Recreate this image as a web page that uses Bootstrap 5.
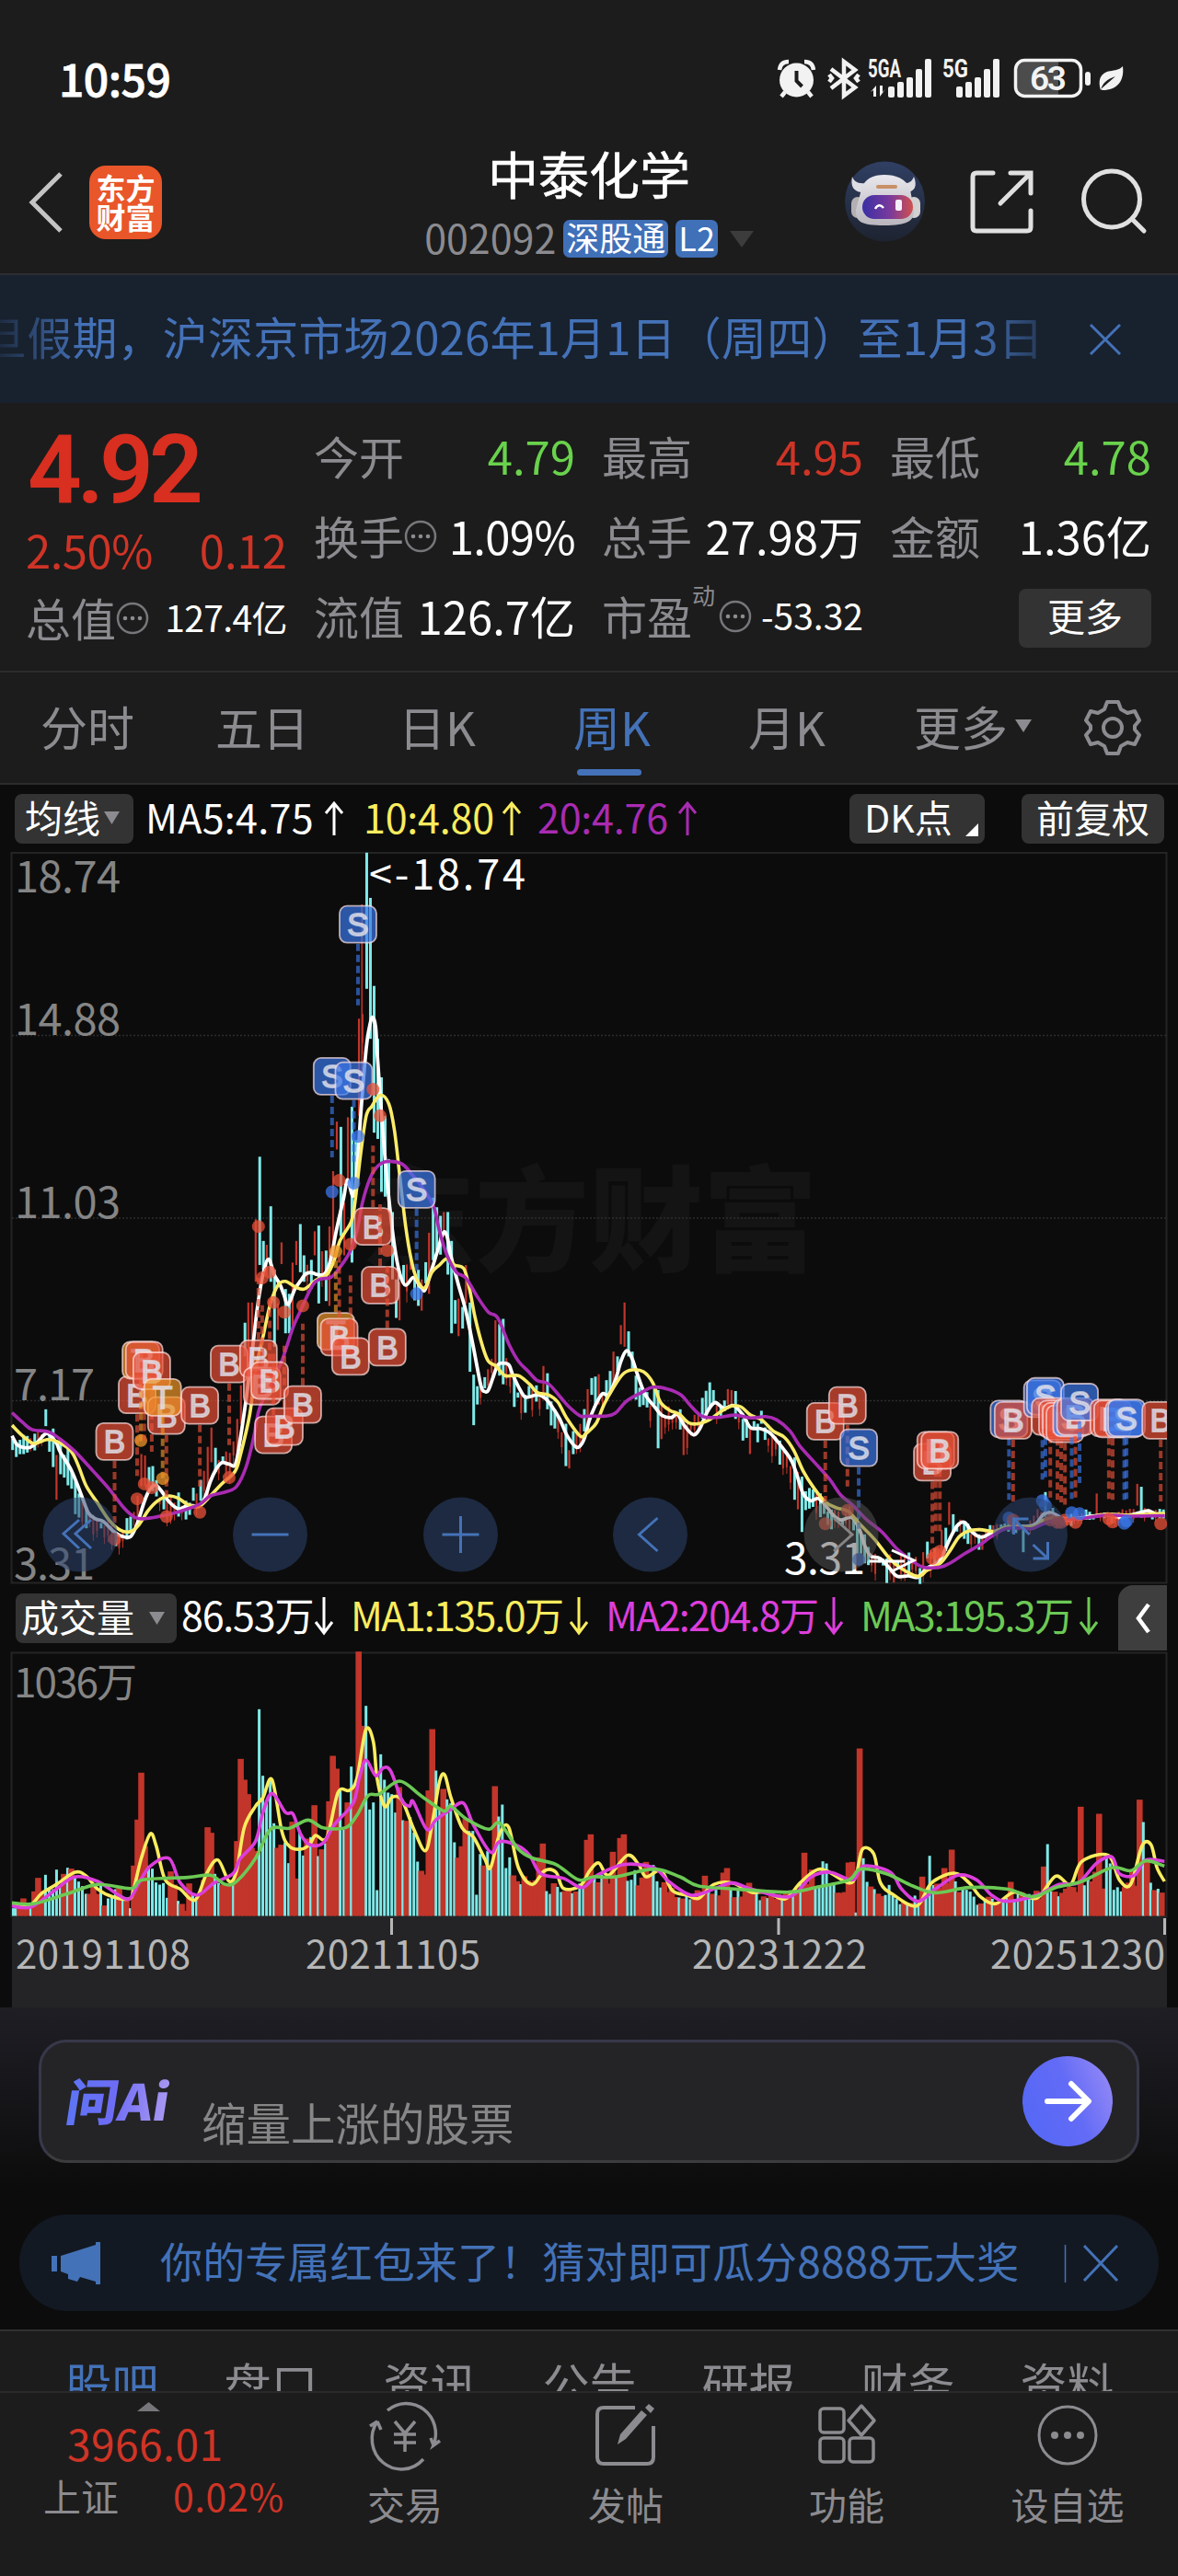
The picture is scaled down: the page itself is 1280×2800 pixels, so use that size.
<!DOCTYPE html>
<html lang="zh-CN">
<head>
    <meta charset="UTF-8">
    <title>中泰化学 002092</title>
    <meta name="viewport" content="width=device-width, initial-scale=1">
    <!-- Bootstrap CDN -->
    <link href="https://cdn.jsdelivr.net/npm/bootstrap@5.3.0/dist/css/bootstrap.min.css" rel="stylesheet">
    <style>
        body { width: 1280px; height: 2800px; overflow: hidden; background: #0c0c0c; color: #fff; font-family: "Noto Sans CJK SC", "Noto Sans", sans-serif; line-height: 1; white-space: nowrap; }
        svg { display: block; flex: none; overflow: visible; }
        .panel { background: #1c1c1c; }
        .t-grey { color: #8b8b90; }
        .t-red { color: #cf3426; }
        .t-green { color: #69d24c; }
        .t-blue { color: #4472b8; }
        .t-yellow { color: #f9ec5f; }
        .t-purple { color: #a92bb2; }
        .t-pink { color: #dc3edc; }
        .t-lime { color: #6cc955; }

        .statusbar { height: 158px; padding: 10px 58px 0 64px; }
        .clock { font-size: 48px; font-weight: 500; letter-spacing: -.5px; -webkit-text-stroke: .8px #fff; }
        .topbar { height: 141px; border-bottom: 2px solid #2e2e31; }
        .topbar .side { width: 400px; }
        .app-logo { width: 79px; height: 80px; border-radius: 18px; background: #e9562a; font-size: 32px; font-weight: 700; padding-top: 7px; line-height: 32px; }
        .stock-name { font-size: 55px; line-height: 58px; -webkit-text-stroke: .6px #fff; }
        .code { font-size: 43px; }
        .chip { height: 41px; border-radius: 7px; background: #4070b8; font-size: 36px; padding: 0 3px; line-height: 36px; }

        .notice { height: 139px; background: #18212e; }
        .marquee-text { width: 1132px; font-size: 49px; text-indent: -20px; overflow: hidden; line-height: 70px; letter-spacing: .2px;
            -webkit-mask-image: linear-gradient(90deg, rgba(0,0,0,.15), #000 90px, #000 1060px, rgba(0,0,0,.3)); }

        .quote { height: 293px; padding: 13px 29px 0 30px; gap: 31px; border-bottom: 2px solid #2c2c2e; font-size: 49px; }
        .quote .qcol { width: 282px; }
        .qline { height: 87px; }
        .qlabel { margin-left: -2px; }
        .price { height: 118px; font-family: Roboto, sans-serif; font-weight: 600; font-size: 103px; letter-spacing: -5px; color: #d92f20; }
        .small-num { font-size: 39px; }
        .more-btn { width: 144px; height: 64px; border-radius: 8px; background: #333; font-size: 41px; padding-bottom: 6px; margin-top: 6px; }

        .ktabs { height: 122px; border-bottom: 2px solid #2c2c2e; font-size: 51px; color: #8b8b90; }
        .ktabs div { width: 190px; height: 116px; }
        .ktabs .current { position: relative; color: #4472b8; }
        .ktabs .current::after { content: ""; position: absolute; left: 57px; top: 105px; width: 70px; height: 7px; border-radius: 4px; background: #4472b8; }

        .legend-row { height: 73px; font-size: 43px; }
        .volume-legend { height: 72px; }
        .pick { height: 54px; border-radius: 8px; background: #333; font-size: 41px; padding-bottom: 5px; }
        .fold { width: 53px; height: 71px; border-radius: 16px 0 0 0; background: #3e3e3e; }

        .dates { height: 99px; margin: 0 12px 0 13px; background: #242426; color: #b6b6b6; font-size: 42px; letter-spacing: .5px; }
        .dates span { padding-top: 18px; }

        .ask { height: 225px; padding: 35px 42px 0; background: linear-gradient(#1f1e25, #0c0c0c 88%); }
        .ask-box { height: 134px; border: 3px solid #37384a; border-bottom-color: #3c3c3e; border-radius: 30px; background: #242426; }
        .ask-hint { font-size: 48.5px; color: #868686; padding-top: 44px; }
        .promo { height: 105px; margin: 0 21px 20px; border-radius: 52px; background: #121922; font-size: 46px; }
        .subtabs { height: 69px; border-top: 2px solid #303032; border-bottom: 2px solid #29292b; overflow: hidden; font-size: 51px; padding: 31px 35px 0 35px; }
        .subtabs span { width: 173px; text-align: center; flex: none; }
        .bottombar { height: 199px; font-size: 41px; }
        .bottombar .tool { width: 240px; }
        .idx { width: 320px; }
    </style>
</head>
<body>
<div class="panel">
    <div class="statusbar d-flex align-items-center justify-content-between">
        <span class="clock">10:59</span>
        <svg width="378" height="50" viewBox="844 60 378 50" fill="#f2f2f2">
            <circle cx="865.500" cy="88" r="18.500"/>
            <path d="M847 77q1-9 10-9M884 77q-1-9-10-9M853 101l-4 5M878 101l4 5" fill="none" stroke="#f2f2f2" stroke-width="4.500"/>
            <path d="M865.500 78v11l6 6" fill="none" stroke="#1c1c1c" stroke-width="4"/>
            <path d="M903 76l26 20-12 9V68l12 9-26 20M901 82l3 4-3 4M933 82l-3 4 3 4" fill="none" stroke="#f2f2f2" stroke-width="4.500"/>
            <text x="943" y="85" font-size="28" font-weight="700" textLength="36" lengthAdjust="spacingAndGlyphs" font-family="Roboto">5GA</text>
            <text x="1024" y="85" font-size="28" font-weight="700" textLength="28" lengthAdjust="spacingAndGlyphs" font-family="Roboto">5G</text>
            <path d="M946 101l6-7v12h-3v-7zM962 98l-6 8V94h3v7z"/>
            <g id="bars"><rect x="965" y="95" width="7" height="12" rx="2"/><rect x="975" y="90" width="7" height="17" rx="2"/><rect x="985" y="85" width="7" height="22" rx="2"/><rect x="995" y="76" width="7" height="31" rx="2"/><rect x="1005" y="65" width="7" height="42" rx="2"/></g>
            <use href="#bars" x="74"/>
            <path d="M1114 68h36v36h-36q-9 0-9-9V77q0-9 9-9z" fill="#4c4c4c"/>
            <rect x="1103.500" y="66.500" width="71" height="39" rx="10" fill="none" stroke="#f2f2f2" stroke-width="3.500"/>
            <rect x="1179" y="79" width="6" height="15" rx="3"/>
            <text x="1139" y="99" font-size="37" font-weight="600" text-anchor="middle" font-family="Roboto" textLength="40">63</text>
            <path d="M1196 99c-4-14 2-20 12-21 6-1 9-2 12-5 2 16-6 26-22 26l-2-1 16-14c-9 3-14 7-16 15z"/>
        </svg>
    </div>

    <div class="topbar d-flex">
        <div class="side d-flex" style="padding: 22px 0 0 31px">
            <svg width="38" height="66" viewBox="0 0 38 66" style="margin-top: 7px"><path d="M35 2L4 33l31 31" fill="none" stroke="#c4c4c4" stroke-width="5"/></svg>
            <div class="app-logo text-center" style="margin-left: 28px">东方<br>财富</div>
        </div>
        <div class="flex-grow-1 text-center">
            <div class="stock-name">中泰化学</div>
            <div class="d-flex align-items-center justify-content-center" style="margin-top: 20px">
                <span class="code t-grey me-2 pb-1">002092</span>
                <span class="chip me-2">深股通</span>
                <span class="chip">L2</span>
                <svg width="26" height="18" viewBox="0 0 26 18" style="margin-left: 13px"><path d="M0 0h26L13 18z" fill="#3c3c3c"/></svg>
            </div>
        </div>
        <div class="side d-flex" style="padding: 17px 0 0 38px">
            <svg width="326" height="88" viewBox="918 175 326 88">
                <defs>
                    <linearGradient id="sky" x2="0" y2="1"><stop stop-color="#303f63"/><stop offset="1" stop-color="#1d2330"/></linearGradient>
                    <linearGradient id="visor"><stop stop-color="#3a2fa5"/><stop offset=".55" stop-color="#7a3a9c"/><stop offset="1" stop-color="#d0504e"/></linearGradient>
                    <linearGradient id="shell" x2="0" y2="1"><stop stop-color="#e8e7ec"/><stop offset="1" stop-color="#b9b6bd"/></linearGradient>
                </defs>
                <circle cx="961.500" cy="219" r="43.500" fill="url(#sky)"/>
                <path d="M926 192c-2 10 1 16 10 17l4-10c-8 1-12-2-14-7zM993 192c4 10 1 16-7 17l-6-10c8 1 11-2 13-7z" fill="#dddde4"/>
                <rect x="925" y="214" width="14" height="23" rx="7" fill="#b4b0b2"/><rect x="986" y="214" width="14" height="23" rx="7" fill="#d3d0d2"/>
                <path d="M936 206c3-12 13-16 25-16s24 4 28 16l4 22c1 12-7 17-32 17s-32-4-31-17z" fill="url(#shell)"/>
                <rect x="952" y="201" width="23" height="4" rx="2" fill="#c98f66"/>
                <rect x="937" y="212" width="55" height="26" rx="13" fill="url(#visor)"/>
                <path d="M951 227q4-7 9-1" fill="none" stroke="#fff" stroke-width="2.500"/><rect x="973" y="217" width="7" height="12" rx="2" fill="#f6eefa"/>
                <g fill="none" stroke="#e0e0e0" stroke-width="5" stroke-linecap="round">
                    <path d="M1079 188h-18q-4 0-4 4v55q0 4 4 4h55q4 0 4-4v-18M1098 188h22v22M1119 189l-32 32"/>
                    <circle cx="1208" cy="216.500" r="30.500"/><path d="M1230 238l13 13"/>
                </g>
            </svg>
        </div>
    </div>
</div>

<div class="notice d-flex align-items-center t-blue">
    <div class="marquee-text pb-2">旦假期，沪深京市场2026年1月1日（周四）至1月3日</div>
    <svg width="34" height="34" viewBox="0 0 34 34" style="margin-left: 52px"><path d="M1 1l32 32M33 1L1 33" stroke="#4472b8" stroke-width="3"/></svg>
</div>

<div class="quote panel d-flex">
    <div class="qcol">
        <div class="price d-flex align-items-center">4.92</div>
        <div class="d-flex align-items-center justify-content-between t-red" style="height: 54px"><span class="qlabel" style="letter-spacing: -.5px">2.50%</span><span>0.12</span></div>
        <div class="d-flex align-items-center" style="height: 95px"><span class="t-grey qlabel">总值</span><svg width="36" height="36"><use href="#info"/></svg><span class="small-num ms-auto" style="letter-spacing: -.6px">127.4亿</span></div>
    </div>
    <div class="qcol">
        <div class="qline d-flex align-items-center justify-content-between"><span class="t-grey qlabel">今开</span><span class="t-green">4.79</span></div>
        <div class="qline d-flex align-items-center"><span class="t-grey qlabel">换手</span><svg width="36" height="36"><use href="#info"/></svg><span class="ms-auto" style="letter-spacing: -.6px">1.09%</span></div>
        <div class="qline d-flex align-items-center justify-content-between"><span class="t-grey qlabel">流值</span><span>126.7亿</span></div>
    </div>
    <div class="qcol">
        <div class="qline d-flex align-items-center justify-content-between"><span class="t-grey qlabel">最高</span><span class="t-red">4.95</span></div>
        <div class="qline d-flex align-items-center justify-content-between"><span class="t-grey qlabel">总手</span><span>27.98万</span></div>
        <div class="qline d-flex align-items-center"><span class="t-grey qlabel">市盈</span><span class="t-grey" style="font-size: 25px; padding-bottom: 44px">动</span><svg class="ms-1" width="36" height="36"><use href="#info"/></svg><span class="small-num ms-auto">-53.32</span></div>
    </div>
    <div class="qcol">
        <div class="qline d-flex align-items-center justify-content-between"><span class="t-grey qlabel">最低</span><span class="t-green">4.78</span></div>
        <div class="qline d-flex align-items-center justify-content-between"><span class="t-grey qlabel">金额</span><span>1.36亿</span></div>
        <div class="qline d-flex align-items-center justify-content-end"><div class="more-btn d-flex align-items-center justify-content-center">更多</div></div>
    </div>
</div>

<div class="ktabs panel d-flex text-center">
    <div class="d-flex align-items-center justify-content-center">分时</div>
    <div class="d-flex align-items-center justify-content-center">五日</div>
    <div class="d-flex align-items-center justify-content-center">日K</div>
    <div class="current d-flex align-items-center justify-content-center">周K</div>
    <div class="d-flex align-items-center justify-content-center">月K</div>
    <div class="d-flex align-items-center justify-content-center ps-4">更多<svg class="ms-2" width="18" height="14"><path d="M0 0h18L9 14z" fill="#8b8b90"/></svg></div>
    <svg class="align-self-center" style="margin-left: 38px" width="62" height="62" viewBox="-31 -31 62 62" fill="none" stroke="#8b8b90" stroke-width="4" stroke-linejoin="round">
        <path d="M-6-28H6L9-20 16-16 24-18 29-8 24-2V2L29 8 24 18 16 16 9 20 6 28H-6L-9 20-16 16-24 18-29 8-24 2V-2L-29-8-24-18-16-16-9-20z"/><circle r="10"/>
    </svg>
</div>

<div class="legend-row d-flex align-items-center">
    <div class="pick d-flex align-items-center" style="margin-left: 16px; width: 129px; padding-left: 11px">均线<svg class="ms-1 mt-1" width="17" height="14"><path d="M0 0h17L8.500 14z" fill="#8b8b90"/></svg></div>
    <div class="d-flex pb-1"><span style="margin-left: 13px; width: 195px; letter-spacing: .3px">MA5:4.75</span><svg width="42" height="44"><use href="#up"/></svg></div>
    <div class="d-flex pb-1 t-yellow" style="letter-spacing: -.2px"><span style="width: 151px">10:4.80</span><svg width="38" height="44"><use href="#up"/></svg></div>
    <div class="d-flex pb-1 t-purple" style="letter-spacing: -.2px"><span style="width: 153px">20:4.76</span><svg width="38" height="44"><use href="#up"/></svg></div>
    <div class="pick d-flex align-items-center position-relative ms-auto" style="width: 147px; padding-left: 16px; margin-right: 40px">DK点<svg class="position-absolute" style="right: 7px; bottom: 8px" width="14" height="14"><path d="M14 0v14H0z" fill="#fff"/></svg></div>
    <div class="pick d-flex align-items-center justify-content-center" style="width: 155px; margin-right: 15px">前复权</div>
</div>

<!-- price chart, drawn by the script below -->
<svg id="priceChart" width="1280" height="797" viewBox="0 926 1280 797"></svg>

<div class="volume-legend legend-row d-flex align-items-start">
    <div class="pick d-flex align-items-center" style="margin: 9px 0 0 17px; width: 175px; padding-left: 6px">成交量<svg class="ms-3 mt-1" width="17" height="14"><path d="M0 0h17L8.500 14z" fill="#8b8b90"/></svg></div>
    <div class="d-flex flex-grow-1" style="padding-top: 10px; letter-spacing: -1.7px">
        <div class="d-flex" style="width: 186px; padding-left: 5px; letter-spacing: -1.2px"><span style="width: 144px">86.53万</span><svg width="22" height="44"><use href="#down"/></svg></div>
        <div class="d-flex t-yellow" style="width: 277px; padding-left: 3px"><span style="width: 237px">MA1:135.0万</span><svg width="22" height="44"><use href="#down"/></svg></div>
        <div class="d-flex t-pink" style="width: 277px; padding-left: 3px"><span style="width: 237px">MA2:204.8万</span><svg width="22" height="44"><use href="#down"/></svg></div>
        <div class="d-flex t-lime" style="width: 270px; padding-left: 3px"><span style="width: 237px">MA3:195.3万</span><svg width="22" height="44"><use href="#down"/></svg></div>
    </div>
    <div class="fold d-flex align-items-center justify-content-center" style="margin-right: 12px"><svg width="18" height="32"><path d="M15 1L4 16l11 15" fill="none" stroke="#fff" stroke-width="4.500"/></svg></div>
</div>

<!-- volume chart -->
<svg id="volumeChart" width="1280" height="288" viewBox="0 1795 1280 288"></svg>

<div class="dates d-flex position-relative">
    <span style="margin-left: 4px; width: 315px">20191108</span><span style="width: 420px">20211105</span><span style="width: 324px">20231222</span><span>20251230</span>
    <svg class="position-absolute top-0 start-0" width="1255" height="20"><path d="M412.500 2v18M833 2v18M1252.500 2v18" stroke="#b6b6b6" stroke-width="3"/></svg>
</div>

<div class="ask">
    <div class="ask-box d-flex align-items-center">
        <svg width="116" height="56" viewBox="0 0 116 56" style="margin-left: 24px">
            <defs><linearGradient id="ai" x1="0" x2="116" gradientUnits="userSpaceOnUse"><stop stop-color="#5a76f5"/><stop offset=".5" stop-color="#6d6cf5"/><stop offset="1" stop-color="#a796f2"/></linearGradient></defs>
            <text transform="skewX(-9)" x="8" y="49" font-size="54" font-weight="900" textLength="112" lengthAdjust="spacingAndGlyphs" fill="url(#ai)">问Ai</text>
        </svg>
        <span class="ask-hint" style="margin-left: 34px">缩量上涨的股票</span>
        <svg class="ms-auto" style="margin-right: 26px" width="98" height="98" viewBox="0 0 98 98">
            <defs><linearGradient id="go" y1=".7" y2=".3"><stop stop-color="#5568f6"/><stop offset=".55" stop-color="#626bf6"/><stop offset="1" stop-color="#9187f6"/></linearGradient></defs>
            <circle cx="49" cy="49" r="49" fill="url(#go)"/><path d="M27 49h44M53 30l19 19-19 19" fill="none" stroke="#fff" stroke-width="6" stroke-linecap="round" stroke-linejoin="round"/>
        </svg>
    </div>
</div>

<div class="promo d-flex align-items-center t-blue">
    <svg width="54" height="48" viewBox="56 2436 54 48" style="margin-left: 35px" fill="#4472b8"><path d="M56 2452h6v17h-6zM66 2452l38-12v-3h5v46h-5v-3l-17-5-3 5-10-3v-5l-8-3z"/></svg>
    <span style="margin-left: 64px; letter-spacing: .15px" class="pb-2">你的专属红包来了！猜对即可瓜分8888元大奖</span>
    <svg class="ms-auto" style="margin-right: 43px" width="60" height="42" viewBox="1155 2438 60 42"><path d="M1156.500 2439v41" stroke="#4472b8" stroke-width="1.500"/><path d="M1177 2440l36 38M1213 2440l-36 38" stroke="#4472b8" stroke-width="3"/></svg>
</div>

<div class="subtabs panel d-flex t-grey">
    <span class="t-blue">股吧</span><span>盘口</span><span>资讯</span><span>公告</span><span>研报</span><span>财务</span><span>资料</span>
</div>

<div class="bottombar panel d-flex t-grey">
    <div class="idx">
        <svg width="25" height="10" style="margin: 10px 0 0 149px"><path d="M0 10L12.500 0 25 10z" fill="#77777b"/></svg>
        <div class="t-red" style="font-size: 46px; letter-spacing: .5px; padding: 11px 0 0 73px">3966.01</div>
        <div class="d-flex" style="padding: 14px 0 0 47px"><span>上证</span><span class="t-red" style="margin-left: 59px; letter-spacing: .7px">0.02%</span></div>
    </div>
    <div class="tool d-flex flex-column align-items-center">
        <svg width="78" height="70" viewBox="-39 -35 78 70" style="margin-top: 11px" fill="none" stroke="#8b8b90" stroke-width="3.500"><path d="M-19-27A32 33 0 0 1 31 11l7-5M31 11l-3-8M20 26A32 33 0 0 1-30-15l-8 5M-30-15l4 9M-11-15L0-2-11-15M11-15L0-2V18M-12-1h24M-12 8h24"/></svg>
        <span style="margin-top: 19px">交易</span>
    </div>
    <div class="tool d-flex flex-column align-items-center">
        <svg width="66" height="70" viewBox="0 0 66 70" style="margin-top: 11px" fill="none" stroke="#8b8b90" stroke-width="4"><path d="M43 5H9q-7 0-7 7v47q0 7 7 7h47q7 0 7-7V25"/><path d="M24 45l3-11 23-26 6 5-23 26zM54 5l4-4 6 5-4 5z" fill="#8b8b90" stroke="none"/></svg>
        <span style="margin-top: 19px">发帖</span>
    </div>
    <div class="tool d-flex flex-column align-items-center">
        <svg width="62" height="70" viewBox="0 0 62 70" style="margin-top: 11px" fill="none" stroke="#8b8b90" stroke-width="3.500"><rect x="2" y="6" width="26" height="26" rx="4"/><rect x="2" y="38" width="26" height="26" rx="4"/><rect x="34" y="38" width="26" height="26" rx="4"/><path d="M47 3l14 16-14 16-14-16z" stroke-linejoin="round"/></svg>
        <span style="margin-top: 19px">功能</span>
    </div>
    <div class="tool d-flex flex-column align-items-center">
        <svg width="66" height="70" viewBox="0 0 66 70" style="margin-top: 11px" fill="#8b8b90"><circle cx="33" cy="35" r="31" fill="none" stroke="#8b8b90" stroke-width="3"/><circle cx="19" cy="35" r="4"/><circle cx="33" cy="35" r="4"/><circle cx="47" cy="35" r="4"/></svg>
        <span style="margin-top: 19px">设自选</span>
    </div>
</div>

<svg width="0" height="0" class="position-absolute">
    <defs>
        <g id="info"><circle cx="18" cy="19" r="16" fill="none" stroke="#77777b" stroke-width="2.500"/><circle cx="10" cy="19" r="2.300" fill="#8b8b90"/><circle cx="18" cy="19" r="2.300" fill="#8b8b90"/><circle cx="26" cy="19" r="2.300" fill="#8b8b90"/></g>
        <path id="up" d="M10 42V8M1 18L10 7l9 11" fill="none" stroke="currentColor" stroke-width="3"/>
        <path id="down" d="M11 3v38M2 30l9 12 9-12" fill="none" stroke="currentColor" stroke-width="3"/>
    </defs>
</svg>

<script src="https://cdn.jsdelivr.net/npm/bootstrap@5.3.0/dist/js/bootstrap.bundle.min.js"></script>
<script>
    const RED = '#c2352a', CYAN = '#7fe9e8';
    let seed = 11;
    const rnd = () => (seed = (seed * 16807) % 2147483647) / 2147483647;

    // "x,y x,y" -> [[x, y]], chart units to page pixels
    const parse = (s, kx, ky, oy, ox = 0) => s.trim().split(/\s+/).map(p => {
        const [x, y] = p.split(',').map(Number);
        return [x / kx + ox, y / ky + oy];
    });

    // smooth curve through the points
    function curve(p)
    {
        let d = `M${p[0]}`;
        for (let i = 0; i < p.length - 1; i++)
        {
            const a = p[i - 1] || p[i], b = p[i], c = p[i + 1], e = p[i + 2] || c;
            d += `C${b[0] + (c[0] - a[0]) / 6},${b[1] + (c[1] - a[1]) / 6} ${c[0] - (e[0] - b[0]) / 6},${c[1] - (e[1] - b[1]) / 6} ${c}`;
        }
        return d;
    }

    function at(p, x)
    {
        for (let i = 1; i < p.length; i++)
            if (x <= p[i][0])
                return p[i - 1][1] + (p[i][1] - p[i - 1][1]) * (x - p[i - 1][0]) / (p[i][0] - p[i - 1][0]);
        return p[p.length - 1][1];
    }

    /* ---------- price ---------- */
    const KX = 2.45, KY = 1.9122;
    const price = (l, r) => parse(l, KX, KY, 920).concat(parse(r, KX, KY, 920, 640));
    const ma5 = price(
        '32,1225 45,1243 60,1249 80,1249 100,1238 125,1220 150,1240 160,1258 190,1297 215,1345 235,1385 255,1398 275,1403 300,1422 325,1434 348,1434 365,1408 385,1360 400,1335 415,1328 430,1340 450,1362 475,1377 500,1370 530,1370 545,1355 560,1320 575,1295 590,1281 610,1284 627,1284 640,1230 655,1150 670,1060 685,960 700,890 715,858 730,890 745,910 755,930 767,952 785,920 800,903 815,888 830,886 845,890 865,888 880,860 895,800 915,730 925,693 940,727 950,680 960,560 975,420 985,370 992,355 1000,375 1005,440 1020,600 1035,730 1050,830 1065,890 1080,912 1100,896 1115,910 1130,923 1145,890 1165,840 1180,803 1190,810 1200,850 1220,910 1240,965 1260,1040 1280,1120 1290,1133 1300,1130 1312,1105 1325,1078 1340,1074 1355,1078 1365,1098 1385,1130 1400,1145 1430,1140 1450,1146 1470,1165 1490,1190 1510,1225 1535,1249 1550,1240 1560,1220',
        '0,1195 15,1165 35,1138 52,1140 70,1110 85,1070 100,1048 115,1065 130,1100 150,1140 175,1165 195,1183 220,1187 235,1180 255,1205 278,1223 295,1210 315,1175 335,1156 360,1168 385,1162 410,1182 430,1208 455,1210 480,1218 500,1235 520,1255 540,1278 555,1310 570,1345 590,1360 610,1355 630,1370 650,1390 670,1400 700,1395 720,1420 735,1455 750,1475 775,1480 800,1500 820,1517 850,1516 875,1519 900,1500 925,1490 940,1475 960,1440 980,1412 1000,1405 1020,1425 1045,1436 1070,1427 1100,1418 1130,1413 1170,1413 1190,1408 1210,1388 1225,1384 1245,1390 1270,1400 1300,1397 1340,1392 1380,1390 1410,1395 1440,1390 1470,1384 1490,1381 1510,1388 1533,1390');
    const ma10 = price(
        '32,1203 60,1225 90,1241 125,1233 155,1238 190,1258 210,1290 230,1330 260,1365 290,1400 320,1421 348,1424 370,1410 395,1380 420,1360 450,1350 475,1355 500,1368 530,1372 560,1350 590,1325 625,1300 640,1265 665,1180 680,1090 700,1020 720,950 740,912 760,904 785,915 810,920 840,902 870,890 890,860 905,820 935,780 945,740 960,640 975,560 990,540 1012,517 1035,535 1050,590 1065,690 1080,790 1095,860 1110,900 1130,918 1150,885 1170,870 1190,857 1210,870 1235,878 1250,920 1265,980 1285,1040 1300,1070 1320,1080 1345,1100 1380,1100 1410,1118 1430,1135 1460,1140 1485,1155 1510,1190 1545,1226 1560,1220',
        '0,1215 20,1198 40,1160 65,1125 90,1097 115,1088 145,1092 170,1115 190,1155 215,1172 240,1180 265,1198 290,1200 320,1192 350,1175 380,1163 405,1165 430,1182 460,1192 490,1215 520,1228 545,1255 570,1298 600,1335 630,1363 660,1375 690,1382 720,1408 760,1440 800,1480 830,1500 875,1517 900,1505 935,1490 960,1465 985,1435 1010,1423 1040,1420 1080,1424 1110,1415 1150,1415 1190,1412 1210,1400 1240,1395 1300,1398 1380,1388 1440,1390 1533,1386');
    const ma20 = price(
        '32,1177 60,1197 85,1212 130,1217 160,1232 200,1258 250,1300 290,1335 330,1375 360,1395 390,1397 440,1390 480,1382 530,1368 560,1350 600,1342 630,1330 655,1290 675,1230 690,1170 720,1120 750,1070 780,1000 800,965 830,915 850,900 880,896 900,880 930,845 950,800 965,740 985,690 1005,665 1030,655 1070,660 1100,685 1130,715 1155,750 1170,800 1190,850 1215,885 1240,897 1270,935 1300,968 1325,980 1355,1035 1380,1070 1405,1090 1430,1110 1460,1117 1490,1143 1515,1165 1545,1184 1560,1184',
        '0,1184 45,1184 70,1178 100,1153 140,1135 170,1124 210,1128 245,1140 270,1162 300,1184 340,1187 390,1182 430,1188 470,1185 500,1192 535,1215 560,1245 600,1280 640,1315 670,1348 700,1368 740,1400 780,1425 820,1460 860,1485 890,1498 935,1498 960,1490 1000,1470 1040,1452 1070,1435 1110,1418 1150,1417 1180,1418 1210,1408 1250,1400 1300,1398 1380,1390 1440,1392 1533,1391');

    // candles with a notable range: x, high, low
    const bigUp = '953,358,560 884,675,860 894,572,630 923,563,700 913,740,850 680,775,905 659,948,1080 669,948,1070 747,823,868 776,865,1000 835,800,850 874,790,955 1140,803,930 1178,760,810 1060,905,985 1090,845,880 1119,900,965 1217,940,1018 1237,870,950 1315,985,1090 560,1208,1280 551,1248,1360 375,1263,1330 384,1266,1330 639,1120,1200 149,1265,1358 364,1350,1410 1443,1080,1150 1560,1128,1200 1512,1255,1293 737,950,1005 786,820,870 708,828,890 630,1190,1280 '
        + '1658,948,1040 1648,995,1035 1629,1050,1120 1590,1097,1160 1756,1160,1232 1815,1190,1265 1933,1128,1160 1943,1130,1160 1991,1205,1263 2119,1300,1378 2138,1320,1450 2530,1363,1410 2611,1430,1462 2922,1345,1390 3030,1325,1370 2374,1490,1530';
    const bigDown = '688,645,870 698,820,880 717,748,905 796,785,885 806,850,905 845,788,950 865,840,945 903,583,810 933,541,865 943,610,690 972,13,296 982,107,400 992,290,595 1001,400,608 1012,480,718 1021,560,728 1031,650,760 1041,760,900 1050,900,980 1070,870,910 1109,880,955 1149,730,860 1159,750,840 1188,760,890 1198,820,1012 1208,943,992 1247,948,1092 1257,1098,1203 1267,1122,1160 1325,993,1100 1335,982,1118 1365,1100,1165 1394,1140,1177 1453,1095,1170 1472,1170,1210 1501,1200,1288 649,990,1060 728,880,1040 757,920,1012 767,930,1012 570,1250,1300 394,1290,1335 404,1288,1340 120,1170,1205 139,1210,1290 198,1320,1388 208,1345,1395 159,1240,1305 179,1250,1328 433,1350,1378 512,1333,1360 '
        + '1571,1105,1140 1580,1102,1160 1638,1060,1090 1668,1008,1060 1678,1050,1085 1688,1100,1150 1698,1125,1165 1746,1130,1251 1736,1120,1160 1805,1170,1212 1884,1114,1165 1893,1130,1160 1952,1132,1190 1981,1190,1235 2021,1173,1200 2070,1235,1285 2109,1270,1358 2129,1310,1425 2276,1395,1470 2296,1430,1490 2540,1388,1425 2601,1430,1462 2726,1415,1467 2785,1342,1395 3040,1331,1395 2364,1480,1531 2443,1500,1533 2472,1445,1480';
    const slots = {};
    const setBig = (list, color) => list.split(' ').forEach(t => {
        const [x, hi, lo] = t.split(',').map(Number);
        slots[Math.round((x / KX - 13) / 4.008)] = [hi / KY + 920, lo / KY + 920, color];
    });
    setBig(bigUp, RED);
    setBig(bigDown, CYAN);

    let out = '<text x="640" y="1372" font-size="124" font-weight="900" text-anchor="middle" fill="#141414">东方财富</text>';
    out += '<path d="M12.500 927H1267.500V1720.500H12.500z" fill="none" stroke="#242424" stroke-width="2"/>';
    [1125.5, 1324, 1522.5].forEach(y => out += `<path d="M13 ${y}H1267" stroke="#2d2d2d" stroke-width="1.500" stroke-dasharray="2 2"/>`);
    ['18.74', '14.88', '11.03', '7.17', '3.31'].forEach((t, i) =>
        out += `<text x="${i > 2 ? 15 : 16}" y="${[970, 1125, 1324, 1522, 1717][i]}" font-size="47" textLength="${i > 2 ? 88 : 115}" fill="#858585">${t}</text>`);

    for (let i = 0; i < 313; i++)
    {
        const x = 13.5 + i * 4.008;
        if (slots[i])
        {
            const [a, b, c] = slots[i];
            out += `<rect x="${x - 1.3}" y="${a}" width="${c === RED ? 2.2 : 3}" height="${b - a}" fill="${c}"/>`;
            continue;
        }
        const falling = at(ma5, x + 8) > at(ma5, x - 8);
        const c = rnd() < (falling ? .55 : .3) ? CYAN : RED;
        const amp = x > 1070 ? .45 : (x > 250 && x < 500 ? 1.5 : .9);
        const mid = Math.min(1700, at(ma5, Math.min(1265, x + 6)) + (rnd() - .5) * 12 * amp);
        const h = (3 + rnd() * 12) * amp;
        out += `<rect x="${x - 1.3}" y="${mid - h}" width="${c === RED ? 2 : 3}" height="${h * 2}" fill="${c}"/>`;
        if (c === RED) out += `<rect x="${x - .8}" y="${mid - h}" width="1" height="${h * 2 + 8 * amp}" fill="${c}"/>`;
    }
    out += `<rect x="392.500" y="983" width="1.500" height="200" fill="${RED}"/>`;
    out += `<path d="${curve(ma5)}" fill="none" stroke="#fff" stroke-width="3.800"/>`;
    out += `<path d="${curve(ma10)}" fill="none" stroke="#fbec6a" stroke-width="3.600"/>`;
    out += `<path d="${curve(ma20)}" fill="none" stroke="#a92bb2" stroke-width="3.600"/>`;
    out += '<text x="401" y="967" font-size="45" textLength="170" fill="#fff">&lt;-18.74</text>';
    out += '<text x="852" y="1711" font-size="46" textLength="88" fill="#fff">3.31</text><path d="M945 1697h38M969 1685l24 11-24 12" fill="none" stroke="#fff" stroke-width="3"/>';

    // trade marks: x, box y, direction of the leader, dot y, kind
    const marks = [
        [305,1237,1,1440,'B'],[365,1140,1,1356,'B'],[375,1068,1,1235,'T'],[384,1068,1,1325,'B'],[404,1090,1,1333,'B'],[443,1183,1,1393,'B'],[433,1145,1,1314,'T'],
        [532,1162,1,1384,'B'],[610,1076,1,1312,'B'],[688,1065,-1,790,'B'],[698,1122,-1,897,'B'],[718,1110,-1,885,'B'],[728,1223,-1,948,'B'],[757,1206,-1,968,'B'],
        [806,1160,-1,955,'B'],[884,478,1,718,'S'],[894,1008,-1,842,'T'],[903,1020,-1,694,'B'],[933,1060,-1,827,'B'],[942,487,1,700,'S'],[953,162,1,603,'S'],
        [993,790,-1,505,'B'],[1012,912,-1,560,'B'],[1031,1041,-1,840,'B'],[1109,713,1,930,'S'],
        [2197,1195,1,1408,'B'],[2256,1162,1,1380,'B'],[2286,1250,1,1482,'S'],[2482,1280,1,1480,'B'],[2491,1255,1,1470,'B'],[2502,1255,1,1465,'B'],
        [2686,1190,1,1396,'S'],[2697,1193,1,1400,'B'],[2775,1148,1,1360,'S'],[2783,1143,1,1370,'S'],[2796,1185,1,1400,'B'],[2815,1190,1,1405,'B'],[2825,1195,1,1405,'B'],[2835,1200,1,1400,'B'],
        [2853,1188,1,1385,'S'],[2863,1185,1,1405,'B'],[2874,1155,1,1387,'S'],[2952,1188,1,1398,'B'],[2962,1190,1,1404,'B'],[2993,1190,1,1407,'S'],[2999,1188,1,1402,'S'],[3090,1193,1,1408,'B']
    ];
    const tone = { B: '232,80,55', S: '58,118,232', T: '238,150,40' };
    out += '<clipPath id="plot"><path d="M0 920H1268V1730H0z"/></clipPath><g clip-path="url(#plot)">';
    marks.forEach(([x, y, dir, dot, k]) => {
        const px = x / KX, py = y / KY + 920, rgb = tone[k];
        out += `<path d="M${px} ${py + dir * 21}v${dir * 67}" stroke="rgba(${rgb},.65)" stroke-width="4" stroke-dasharray="8 4"/>`;
        out += `<circle cx="${px}" cy="${dot / KY + 920}" r="7" fill="rgba(${rgb},.75)"/>`;
        out += `<rect x="${px - 20}" y="${py - 20}" width="40" height="40" rx="8" fill="rgba(${rgb},.7)" stroke="rgba(255,225,225,.7)" stroke-width="1.800"/>`;
        out += `<text x="${px}" y="${py + 12.500}" font-family="Liberation Sans" font-size="35" text-anchor="middle" fill="rgba(225,225,235,.75)" stroke="rgba(225,225,235,.7)" stroke-width="1.800">${k}</text>`;
    });
    out += '</g>';

    // floating controls
    const ctl = [[87, 'M-1-16l-17 15 17 16M12-16L-5-1l17 16'], [293.5, 'M-20 0h40'], [500.5, 'M-20 0h40M0-20v40'], [706.5, 'M8-18l-20 18L8 18'], [914, 'M-8-18L12 0-8 18'], [1119.5, 'M-18 0v-17h16M-18-17L-1 0M3 11l16 15M19 8v18H3']];
    ctl.forEach(([x, d], i) => out += `<g transform="translate(${x} 1668)"><circle r="40.500" fill="${i === 4 ? 'rgba(85,85,85,.5)' : 'rgba(43,68,110,.55)'}"/><path d="${d}" fill="none" stroke="${i === 4 ? '#858585' : '#4472b8'}" stroke-width="3"/></g>`);
    document.getElementById('priceChart').innerHTML = out;

    /* ---------- volume ---------- */
    // colour flag + bar top, counted down from the frame
    const first = 'C852 C852 R835 R820 R848 C848 R797 R753 R797 C743 C790 C790 C726 C780 R740 C720 R723 C750 C765 C780 C805 R805 R775 R805 C770 R843 C820 C815 C790 R785 C820 R825 C852 R713 R563 R410 R650 C715 C723 C768 C775 C770 C818 R732 R775 C828 R838 R860 R771 C805 C815 R800 R760 R588 R606 C740 C770 R775 R775 R770 C775 R633 R365 R433 R480 R655 R665 C203 C420 C500 C435 C575 R655 R645 C638 C705 R570 R755 C598 C680 R625 C620 R516 C682 R660 C640 R503 R355 R397 C470 C595 R507 C390 R460 R15 R257 C192 C530 C507 C793 C350 C433 C475 C480 C540 R457 C565 R567 C555 C605 C700 R730 R742 R468 R268 C403 C530 R463 C497 C510 C637 R687 R650 R560 C600 C600 C808';
    const vol = first.split(' ').map(t => [t[0] === 'R' ? RED : CYAN, (877 - t.slice(1)) / 3]);
    const base = parse('127,180 131,200 136,120 143,110 150,80 155,110 165,135 175,125 182,65 190,90 200,85 205,62 215,100 225,105 229,110 235,85 243,38 250,110 256,110 262,50 270,62 280,75 288,90 294,140 300,95 306,130 312,100', 1, 3, 0);
    const spikes = { 131: 'R723', 132: 'C822', 133: 'C783', 134: 'C990', 135: 'C955', 143: 'R955', 144: 'R910', 156: 'R898', 157: 'R880', 163: 'R937', 165: 'R892', 166: 'R880', 172: 'R970', 174: 'C980', 188: 'R1015', 193: 'R1005', 194: 'R990', 200: 'R1038', 215: 'R940', 217: 'R995', 220: 'C968', 221: 'C975', 227: 'R972', 228: 'R970', 229: 'C1135', 230: 'R600', 231: 'C958', 232: 'C1035', 238: 'C1045', 247: 'R1018', 249: 'C950', 253: 'R990', 255: 'R930', 271: 'R1035', 280: 'R985', 281: 'C912', 290: 'R790', 295: 'R813', 297: 'C945', 298: 'C975', 304: 'R1000', 306: 'R767', 307: 'C840', 308: 'R970', 312: 'R1070' };
    for (let i = 127; i < 313; i++)
    {
        const s = spikes[i];
        const r = rnd(), q = rnd();
        vol.push(s ? [s[0] === 'R' ? RED : CYAN, (1146 - s.slice(1)) / 3] : [r < .52 ? RED : CYAN, at(base, i) * (.7 + q * .45)]);
    }
    let v = '<path d="M12.500 1796.500H1267.500V2083H12.500z" fill="none" stroke="#242424" stroke-width="2"/>';
    v += '<text x="15" y="1845" font-size="44" textLength="134" fill="#858585">1036万</text>';
    vol.forEach(([c, h], i) => {
        const x = 13.4 + i * 4.003, w = c === RED ? 6.6 : 3;
        v += `<rect x="${Math.max(13, x - w / 2)}" y="${2082.5 - h}" width="${w}" height="${h}" fill="${c}"/>`;
    });
    const vline = (s, color) => v += `<path d="${curve(parse(s, 1.225, 3, 1700))}" fill="none" stroke="${color}" stroke-width="3.600"/>`;
    vline('16,1108 40,1112 55,1075 75,1045 100,1005 115,1018 130,1060 150,1085 172,1092 178,1060 188,960 200,880 208,920 220,1030 240,1060 252,1090 262,1090 275,1010 290,965 305,1035 315,1000 325,860 340,790 350,762 362,703 375,870 385,920 400,930 412,915 420,885 435,892 450,745 465,738 475,700 487,540 497,580 502,700 512,790 522,760 535,770 550,860 566,935 575,850 585,710 592,688 600,760 615,860 630,890 645,960 653,990 665,880 677,858 690,990 708,1045 725,1000 740,1005 750,1058 772,1050 785,1000 797,975 810,1015 835,950 850,980 860,1020 880,1000 895,1065 915,1080 930,1090 950,1045 975,1040 1000,1070 1020,1070 1045,1092 1065,1040 1085,1000 1100,1000 1130,1040 1140,1010 1148,930 1163,945 1172,1040 1190,1080 1220,1115 1240,1040 1270,1008 1290,1040 1305,1085 1325,1108 1350,1070 1380,1090 1405,1018 1425,1045 1440,970 1475,950 1490,1030 1505,1045 1520,920 1532,915 1540,990 1550,1035', '#f9ec5f');
    vline('16,1115 42,1118 75,1060 100,1020 130,1035 155,1075 172,1092 185,1040 200,985 225,960 240,1040 262,1080 285,1040 310,1010 320,960 340,905 350,810 362,748 380,810 390,815 400,880 412,915 430,910 445,850 470,780 478,700 487,640 500,690 510,665 520,675 535,770 545,790 550,775 568,865 580,835 600,800 617,780 630,850 653,940 665,905 690,920 705,950 720,1010 750,1025 775,1055 795,1015 830,980 870,990 890,1035 920,1080 950,1060 975,1040 1000,1060 1050,1085 1080,1020 1105,1005 1135,1030 1150,985 1185,1005 1200,1060 1222,1100 1245,1060 1275,1015 1300,1030 1320,1080 1340,1100 1380,1080 1410,1045 1435,1040 1460,975 1480,955 1490,1010 1510,1015 1525,965 1550,970', '#dc3edc');
    vline('16,1105 45,1108 90,1075 130,1045 175,1058 190,1030 250,1022 280,1015 300,1045 315,1035 340,960 360,865 385,862 410,835 430,860 460,860 475,820 490,755 505,750 532,708 560,755 590,805 600,790 620,830 650,865 665,845 690,930 710,960 740,980 770,1030 790,1020 820,1020 870,995 905,1020 930,1050 980,1060 1050,1070 1085,1055 1130,1030 1145,995 1180,1010 1215,1050 1245,1072 1290,1055 1340,1060 1375,1085 1405,1055 1440,1035 1480,990 1505,1000 1525,968 1550,985', '#6cc955');
    document.getElementById('volumeChart').innerHTML = v;
</script>
</body>
</html>
